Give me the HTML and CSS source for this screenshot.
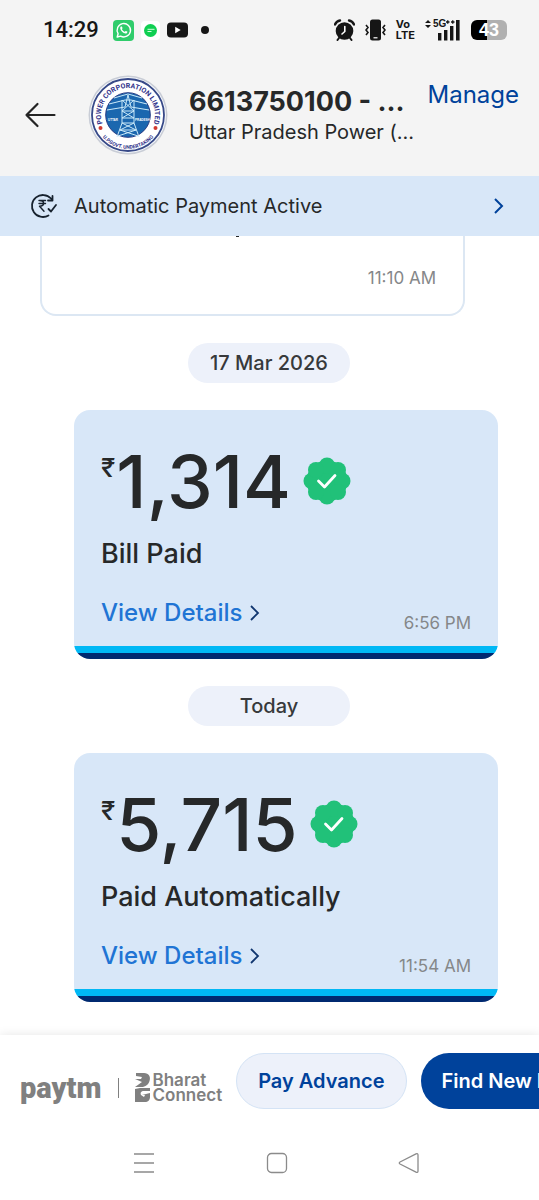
FILE: index.html
```html
<!DOCTYPE html>
<html lang="en">
<head>
<meta charset="utf-8">
<meta name="viewport" content="width=device-width, initial-scale=1">
<title>Automatic Payment</title>
<link rel="stylesheet" href="styles.css">
</head>
<body>
<div class="app">
  <div class="status">
    <div class="status-left">
      <span class="clock">14:29</span>
      <svg width="21" height="21" viewBox="0 0 21 21"><rect width="21" height="21" rx="4" fill="#2fcc6b"/><path d="M4.200 17l.9-3.300a6.700 6.700 0 1 1 2.500 2.400z" fill="none" stroke="#fff" stroke-width="1.400" stroke-linejoin="round"/><path d="M7.600 6.800c.5-.6 1.200-.5 1.400 0l.5 1.200c.1.400-.5.900-.6 1.200.6 1.200 1.500 2 2.700 2.500.3 0 .8-.9 1.200-.8l1.400.7c.4.300.1 1.300-.5 1.700-2.400 1.300-6.900-3-6.500-5.500.1-.400.200-.700.400-1z" fill="#fff"/></svg>
      <svg width="19" height="19" viewBox="0 0 19 19"><rect width="19" height="19" rx="4" fill="#fff"/><circle cx="9.500" cy="9.500" r="6.500" fill="#10cf52"/><path d="M6.500 8.300h7M6.500 10.500h4" stroke="#d5ffe2" stroke-width="1"/></svg>
      <svg width="21" height="16" viewBox="0 0 21 16"><rect y=".5" width="21" height="15" rx="4" fill="#161616"/><path d="M8.200 4.800v6.400l5.500-3.200z" fill="#fff"/></svg>
      <span class="dot"></span>
    </div>
    <div class="status-right">
      <svg width="21" height="22" viewBox="0 0 21 22" fill="none" stroke="#161616"><circle cx="10.500" cy="12" r="8.800" fill="#161616" stroke="none"/><path d="M1 5.500Q2.500 2 6 1.500M20 5.500Q18.500 2 15 1.500" stroke-width="2.400" stroke-linecap="round"/><path d="M5 19l-1.500 2M16 19l1.500 2" stroke-width="2" stroke-linecap="round"/><path d="M10.800 7.500v5l-2.800 2.500" stroke="#fff" stroke-width="1.600" stroke-linecap="round"/></svg>
      <svg width="21" height="22" viewBox="0 0 21 22" fill="none" stroke="#161616" stroke-width="1.600"><rect x="5" y="0.500" width="11" height="21" rx="2.500" fill="#161616" stroke="none"/><path d="M8.500 18.800h4" stroke="#fff" stroke-width="1.200"/><path d="M1 6l2 2.500-2 2.500 2 2.500-2 2.500M20 6l-2 2.500 2 2.500-2 2.500 2 2.500"/></svg>
      <span class="volte"><span>Vo</span><span>LTE</span></span>
      <svg width="36" height="22" viewBox="0 0 36 22" fill="#161616"><path d="M0 4l3-3 3 3zM0 6l3 3 3-3z"/><text x="8" y="8" class="net">5G</text><path d="M21 3h3.500M22.750 1.200v3.600M26 3h3.500M27.750 1.200v3.600" stroke="#161616" stroke-width="1.300"/><path d="M13 14h3.400v7.500H13zM19 11h3.400v10.500H19zM25 7h3.400v14.500H25zM31 1h3.600v20.500H31z"/></svg>
      <span class="battery">43</span>
    </div>
  </div>

  <header class="header">
    <button class="back" aria-label="Back"><svg width="32" height="26" viewBox="0 0 32 26" fill="none" stroke="#232323" stroke-width="2.200" stroke-linecap="round" stroke-linejoin="round"><path d="M13.500 2L2.500 13l11 11M2.500 13h28"/></svg></button>
    <svg class="seal" width="80" height="80" viewBox="0 0 80 80" role="img" aria-label="Uttar Pradesh Power Corporation Limited">
      <defs><path id="arc-top" d="M20.900 59.100A27 27 0 1 1 59.100 59.100"/><path id="arc-low" d="M9 53A33.500 33.500 0 0 0 71 53"/></defs>
      <circle cx="40" cy="40" r="39.500" fill="#c9cdd6"/><circle cx="40" cy="40" r="38" fill="#f5f8fc"/>
      <circle cx="40" cy="40" r="36" fill="#fff" stroke="#374988" stroke-width="1.800"/>
      <circle cx="40" cy="40" r="22.300" fill="#1b67af" stroke="#263a83" stroke-width="1"/>
      <g class="seal-text"><text text-anchor="middle" class="seal-top"><textPath href="#arc-top" startOffset="50%">POWER CORPORATION LIMITED</textPath></text>
      <text text-anchor="middle" class="seal-low"><textPath href="#arc-low" startOffset="50%">U.P.GOVT. UNDERTAKING</textPath></text></g>
      <circle cx="12.500" cy="53" r="2" fill="#d03a31"/><circle cx="67.500" cy="53" r="2" fill="#d03a31"/>
      <path d="M19 35l18-3 3-12 3 12 18 3M21 29l16-4h6l16 4M26 23l14-4 14 4M34 25v23M46 25v23M34 36h12M34 43h12M34 25l12 11M46 25L34 36M34 36l12 7M46 36l-12 7M34 48h12l5 14M34 48l-5 14M34 48l14 7M46 48l-14 7M32 55h16M32 55l18 6M48 55l-18 6" fill="none" stroke="#cbeaf9" stroke-width="1"/>
      <text x="20" y="46" class="seal-name">UTTAR</text><text x="47" y="46" class="seal-name">PRADESH</text>
    </svg>
    <div class="who"><h1 class="account">6613750100 - ...</h1><p class="biller">Uttar Pradesh Power (...</p></div>
    <a class="manage" href="#manage">Manage</a>
  </header>

  <a class="banner" href="#autopay">
    <svg width="28" height="26" viewBox="0 0 28 26" fill="none" stroke="#17222e" stroke-width="1.800" stroke-linecap="round" stroke-linejoin="round"><path d="M21 5.500A11 11 0 1 0 18.500 22.500M22.500 3v4.500h-4.500M18.500 16l2.500 2.500 5-6.500"/><path d="M9 7.500h6.500M9 10.500h6.500M9.500 7.500c5.500 0 5.500 5.800 0 5.800l4.500 5" stroke-width="1.400"/></svg>
    <span class="banner-label">Automatic Payment Active</span>
    <svg width="12" height="18" viewBox="0 0 12 18" fill="none" stroke="#00429b" stroke-width="2"><path d="M2 2l7 7-7 7"/></svg>
  </a>

  <main class="feed">
    <article class="received"><span class="tail"></span><time class="time">11:10 AM</time></article>
    <div class="day">17 Mar 2026</div>
    <article class="paid">
      <div class="amount"><span class="rupee">₹</span><span class="value">1,314</span>
        <svg class="badge" width="48" height="48" viewBox="-24 -24 48 48"><g fill="#21c179"><circle r="20.500"/><circle cy="-15.500" r="8"/><circle cy="15.500" r="8"/><circle cx="-15.500" r="8"/><circle cx="15.500" r="8"/><circle cx="-11" cy="-11" r="8"/><circle cx="11" cy="-11" r="8"/><circle cx="-11" cy="11" r="8"/><circle cx="11" cy="11" r="8"/></g><path d="M-8.500 0l6 6L8-5.500" fill="none" stroke="#fff" stroke-width="2.800" stroke-linecap="round" stroke-linejoin="round"/></svg>
      </div>
      <p class="state">Bill Paid</p>
      <div class="foot"><a class="details" href="#bill">View Details <svg width="10" height="16" viewBox="0 0 10 16" fill="none" stroke="#10366f" stroke-width="1.800"><path d="M1 1l7 7-7 7"/></svg></a><time class="time">6:56 PM</time></div>
    </article>
    <div class="day">Today</div>
    <article class="paid">
      <div class="amount"><span class="rupee">₹</span><span class="value">5,715</span>
        <svg class="badge" width="48" height="48" viewBox="-24 -24 48 48"><g fill="#21c179"><circle r="20.500"/><circle cy="-15.500" r="8"/><circle cy="15.500" r="8"/><circle cx="-15.500" r="8"/><circle cx="15.500" r="8"/><circle cx="-11" cy="-11" r="8"/><circle cx="11" cy="-11" r="8"/><circle cx="-11" cy="11" r="8"/><circle cx="11" cy="11" r="8"/></g><path d="M-8.500 0l6 6L8-5.500" fill="none" stroke="#fff" stroke-width="2.800" stroke-linecap="round" stroke-linejoin="round"/></svg>
      </div>
      <p class="state">Paid Automatically</p>
      <div class="foot"><a class="details" href="#autopaid">View Details <svg width="10" height="16" viewBox="0 0 10 16" fill="none" stroke="#10366f" stroke-width="1.800"><path d="M1 1l7 7-7 7"/></svg></a><time class="time">11:54 AM</time></div>
    </article>
  </main>

  <footer class="actions">
    <div class="brands">
      <span class="paytm">paytm</span>
      <span class="rule"></span>
      <svg width="16" height="30" viewBox="0 0 16 30" fill="#808080"><path d="M1 0h8c5 0 7 4 5.500 8-1 3.500-4 6-8 6H0l7-5-7-3h6l1-2-6-1z"/><path d="M0 16l5-1h10v3H9c-3 0-4 2-3 4l3 2 1-2H7l8-2v4c0 3-2 5-5 5H0z"/></svg>
      <span class="bharat"><span>Bharat</span><span>Connect</span></span>
    </div>
    <button class="pill pill-light">Pay Advance</button>
    <button class="pill pill-dark">Find New Bill</button>
  </footer>

  <nav class="system">
    <button aria-label="Recent apps"><svg width="22" height="22" viewBox="0 0 22 22" fill="none" stroke="#8b8b8b" stroke-width="1.300"><path d="M1 2h20M1 11h20M1 20h20"/></svg></button>
    <button aria-label="Home"><svg width="22" height="22" viewBox="0 0 22 22" fill="none" stroke="#8b8b8b" stroke-width="1.300"><rect x="1.500" y="1.500" width="19" height="19" rx="4"/></svg></button>
    <button aria-label="Back"><svg width="22" height="22" viewBox="0 0 22 22" fill="none" stroke="#8b8b8b" stroke-width="1.300" stroke-linejoin="round"><path d="M2 10L18 1.800Q20 1 20 3v16q0 2-2 1.200L2 12q-1.500-1 0-2z"/></svg></button>
  </nav>
</div>
</body>
</html>
```
FILE: styles.css
```css
* { box-sizing: border-box; }
body { margin: 0; background: #fff; color: #262829; font-family: Inter, "Noto Sans", sans-serif; }
h1, p { margin: 0; }
a { color: inherit; text-decoration: none; }
button { margin: 0; padding: 0; border: 0; background: none; font: inherit; color: inherit; }
svg { display: block; flex: none; }

.app { display: flex; flex-direction: column; height: 100vh; overflow: hidden; }

.status { display: flex; flex: none; align-items: center; justify-content: space-between; height: 60px; padding: 0 32px 0 43px; background: #f4f4f4; color: #161616; }
.status-left, .status-right { display: flex; align-items: center; }
.status-left { gap: 7px; }
.clock { margin-right: 7px; font: 500 22px/28px Roboto, sans-serif; }
.dot { width: 8px; height: 8px; margin-left: 6px; border-radius: 50%; background: #161616; }
.status-right { gap: 10px; }
.volte { display: flex; flex-direction: column; font-size: 11px; font-weight: 700; line-height: 11px; }
.net { font: 700 10px "Liberation Sans", sans-serif; }
.battery { width: 36px; height: 20px; border-radius: 6px; background: linear-gradient(90deg, #000 45%, #b0b0b0 45%); color: #fff; font: 700 18px/20px "Liberation Sans", sans-serif; text-align: center; }

.header { display: flex; flex: none; align-items: flex-start; height: 116px; padding: 15px 20px 0 24px; background: #f4f4f4; }
.back { margin: 27px 32px 0 0; }
.seal { margin-right: 21px; }
.seal-text { fill: #30318a; font-family: Roboto, sans-serif; font-weight: 700; }
.seal-top { font-size: 7px; }
.seal-low { font-size: 5px; }
.seal-name { fill: #fff; font: 700 3px "Liberation Sans", sans-serif; }
.who { flex: 1; min-width: 0; padding-top: 11px; white-space: nowrap; }
.account { font-size: 27px; font-weight: 700; line-height: 32px; }
.biller { font-size: 20px; line-height: 28px; }
.manage { padding-top: 4px; color: #00429b; font-size: 24px; line-height: 32px; }

.banner { display: flex; flex: none; align-items: center; height: 60px; padding: 0 34px 0 30px; background: #d8e7f8; }
.banner-label { flex: 1; margin-left: 16px; font-size: 20px; line-height: 28px; }

.feed { display: flex; flex: 1; flex-direction: column; justify-content: flex-end; min-height: 0; padding: 0 41px 33px 40px; overflow: hidden; }
.received { display: flex; flex: none; flex-direction: column; align-items: flex-end; justify-content: space-between; width: calc(100% - 33px); height: 82px; padding: 0 27px 24px; border: 2px solid #dce7f3; border-top: 0; border-radius: 0 0 16px 16px; }
.tail { align-self: flex-start; width: 3px; height: 3px; margin-left: 167px; background: #262829; }
.time { color: #858789; font-size: 17px; line-height: 24px; }
.day { flex: none; align-self: center; min-width: 162px; margin: 27px 0; padding: 6px 20px; border-radius: 20px; background: #edf1fa; color: #37393b; font-size: 20px; font-weight: 500; line-height: 28px; text-align: center; }
.paid { display: flex; flex: none; flex-direction: column; margin-left: 34px; padding: 32px 27px 22px; border-radius: 16px; background: linear-gradient(0deg, #002970 6px, #00b8f5 6px, #00b8f5 13px, #d8e7f8 13px); }
.amount { display: flex; align-items: center; height: 80px; }
.rupee { align-self: flex-start; padding-top: 10px; font-size: 26px; font-weight: 500; line-height: 32px; }
.value { margin-left: 1px; font-size: 73px; font-weight: 500; line-height: 80px; }
.badge { margin: 0 0 3px 12px; }
.state { margin-top: 16px; font-size: 27px; font-weight: 500; line-height: 32px; }
.foot { display: flex; align-items: flex-end; justify-content: space-between; margin-top: 27px; }
.foot .time { margin-bottom: 2px; }
.details { display: flex; align-items: center; gap: 8px; padding-bottom: 8px; color: #2074d4; font-size: 24px; font-weight: 500; line-height: 32px; }

.actions { z-index: 1; display: flex; flex: none; align-items: center; gap: 14px; padding: 18px 0 17px 20px; background: #fff; box-shadow: 0 0 10px rgba(0, 0, 0, .1); clip-path: inset(-10px 0 0 0); }
.brands { display: flex; flex: none; align-items: center; padding-top: 14px; color: #808080; }
.paytm { font: 900 29px/32px Roboto, sans-serif; }
.rule { width: 1px; height: 20px; margin: 0 16px; background: #808080; }
.bharat { display: flex; flex-direction: column; margin-left: 2px; font-size: 17px; font-weight: 600; line-height: 15px; }
.pill { flex: none; height: 56px; padding: 0 21px; border-radius: 28px; font-size: 20px; font-weight: 600; line-height: 28px; white-space: nowrap; }
.pill-light { border: 1px solid #d4e3f5; background: #edf1fa; color: #00429b; }
.pill-dark { background: #00429b; color: #fff; }

.system { display: flex; flex: none; align-items: center; justify-content: space-between; height: 74px; padding: 0 119px 0 133px; background: #fff; }
```
